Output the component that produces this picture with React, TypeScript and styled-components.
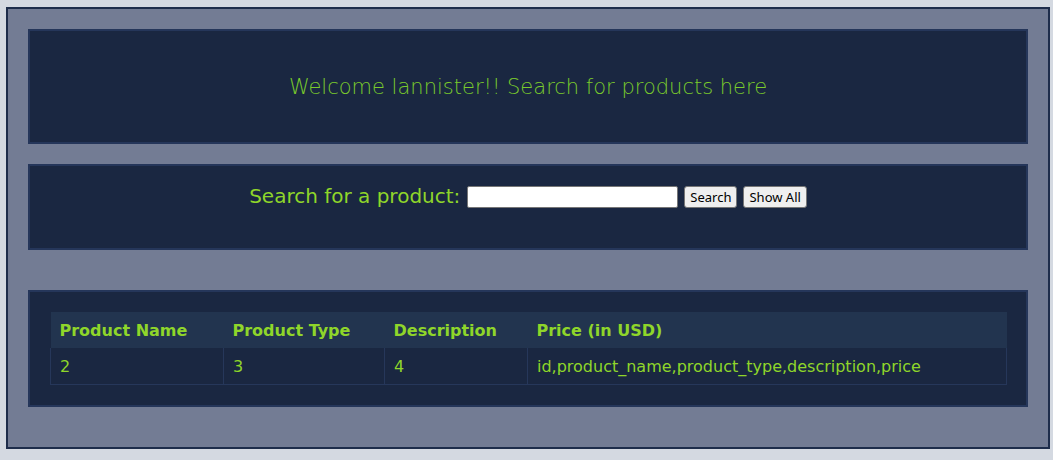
import React from "react";
import styled, { createGlobalStyle } from "styled-components";

const Global = createGlobalStyle`
  html, body { margin: 0; padding: 0; }
  body {
    background: #d4d9e1;
    font-family: "DejaVu Sans", "Liberation Sans", sans-serif;
    padding: 7px 3px 0 6px;
  }
`;

const Outer = styled.div`
  box-sizing: border-box;
  width: 1044px;
  height: 442px;
  background: #737c94;
  border: 2px solid #1e2d4b;
  padding: 20px;
  display: flex;
  flex-direction: column;
`;

const Panel = styled.section<{ $h: number; $mb: number }>`
  box-sizing: border-box;
  height: ${(p) => p.$h}px;
  margin-bottom: ${(p) => p.$mb}px;
  background: #1a2741;
  border: 2px solid #25365a;
`;

const WelcomePanel = styled(Panel)`
  display: flex;
  align-items: center;
  justify-content: center;
`;

const Welcome = styled.h1`
  margin: 0;
  font-size: 21px;
  font-weight: 300;
  color: #7acb2c;
  padding-top: 1px;
`;

const SearchPanel = styled(Panel)`
  display: flex;
  justify-content: center;
  align-items: flex-start;
  padding-top: 17px;
`;

const SearchRow = styled.form`
  display: flex;
  align-items: center;
  gap: 6px;
  margin: 0;
`;

const Label = styled.label`
  font-size: 20px;
  color: #8fd62a;
  margin-right: 1px;
`;

const Input = styled.input`
  box-sizing: border-box;
  width: 211px;
  height: 22px;
  border: 1px solid #767676;
  border-radius: 2px;
  background: #fff;
  margin-top: 3px;
`;

const Button = styled.button`
  box-sizing: border-box;
  height: 22px;
  padding: 0 5px;
  font: 13px "Noto Sans", "Open Sans", sans-serif;
  color: #000;
  background: #efefef;
  border: 1px solid #767676;
  border-radius: 3px;
  margin-top: 3px;
`;

const TablePanel = styled(Panel)`
  padding: 20px;
`;

const Table = styled.table`
  width: 956px;
  border-collapse: collapse;
  table-layout: fixed;
`;

const Th = styled.th<{ $w: number }>`
  box-sizing: border-box;
  width: ${(p) => p.$w}px;
  height: 36px;
  padding: 0 9px;
  text-align: left;
  font-size: 16px;
  font-weight: bold;
  color: #8fd62a;
  background: #22344f;
`;

const Td = styled.td`
  box-sizing: border-box;
  height: 36px;
  padding: 1px 9px 0;
  font-size: 16px;
  color: #8fd62a;
  border: 1px solid #26375a;
  border-top: none;
`;

export default function App() {
  const cols = [
    ["Product Name", 173],
    ["Product Type", 161],
    ["Description", 143],
    ["Price (in USD)", 479],
  ] as const;
  const row = ["2", "3", "4", "id,product_name,product_type,description,price"];
  return (
    <>
      <Global />
      <Outer>
        <WelcomePanel $h={115} $mb={20}>
          <Welcome>Welcome lannister!! Search for products here</Welcome>
        </WelcomePanel>
        <SearchPanel $h={86} $mb={40}>
          <SearchRow onSubmit={(e) => e.preventDefault()}>
            <Label>Search for a product:</Label>
            <Input type="text" />
            <Button type="submit">Search</Button>
            <Button type="button">Show All</Button>
          </SearchRow>
        </SearchPanel>
        <TablePanel $h={117} $mb={0}>
          <Table>
            <thead>
              <tr>
                {cols.map(([c, w]) => (
                  <Th key={c} $w={w}>
                    {c}
                  </Th>
                ))}
              </tr>
            </thead>
            <tbody>
              <tr>
                {row.map((v, i) => (
                  <Td key={i}>{v}</Td>
                ))}
              </tr>
            </tbody>
          </Table>
        </TablePanel>
      </Outer>
    </>
  );
}
